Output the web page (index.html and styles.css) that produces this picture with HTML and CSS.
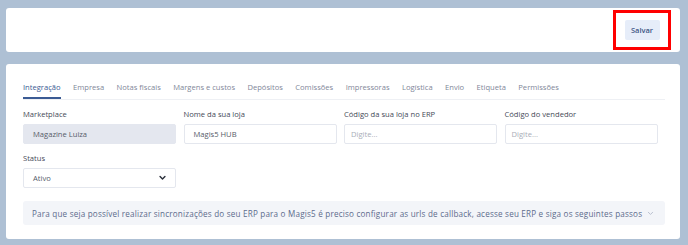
FILE: index.html
```html
<!DOCTYPE html>
<html lang="pt-BR">
<head>
<meta charset="utf-8">
<link rel="stylesheet" href="styles.css">
</head>
<body>
<div class="page">
  <div class="card topbar">
    <div class="highlight">
      <button class="btn-save">Salvar</button>
    </div>
  </div>
  <div class="card main">
    <nav class="tabs">
      <span class="tab active">Integração</span>
      <span class="tab">Empresa</span>
      <span class="tab">Notas fiscais</span>
      <span class="tab">Margens e custos</span>
      <span class="tab">Depósitos</span>
      <span class="tab">Comissões</span>
      <span class="tab">Impressoras</span>
      <span class="tab">Logística</span>
      <span class="tab">Envio</span>
      <span class="tab">Etiqueta</span>
      <span class="tab">Permissões</span>
    </nav>
    <div class="grid">
      <div class="field">
        <label class="label">Marketplace</label>
        <div class="input disabled">Magazine Luiza</div>
      </div>
      <div class="field">
        <label class="label">Nome da sua loja</label>
        <div class="input">Magis5 HUB</div>
      </div>
      <div class="field">
        <label class="label">Código da sua loja no ERP</label>
        <div class="input placeholder">Digite...</div>
      </div>
      <div class="field">
        <label class="label">Código do vendedor</label>
        <div class="input placeholder">Digite...</div>
      </div>
      <div class="field">
        <label class="label">Status</label>
        <div class="input select">
          <span>Ativo</span>
          <svg class="chev" viewBox="0 0 10 8" width="7" height="6"><path d="M1.5 2 L5 5.5 L8.5 2" fill="none" stroke="#2a2f3a" stroke-width="2" stroke-linecap="round" stroke-linejoin="round"/></svg>
        </div>
      </div>
    </div>
    <div class="alert">
      <span>Para que seja possível realizar sincronizações do seu ERP para o Magis5 é preciso configurar as urls de callback, acesse seu ERP e siga os seguintes passos</span>
      <svg class="alert-chev" viewBox="0 0 10 8" width="7" height="5"><path d="M1.5 2 L5 5.5 L8.5 2" fill="none" stroke="#b4bccb" stroke-width="1.4" stroke-linecap="round" stroke-linejoin="round"/></svg>
    </div>
  </div>
</div>
</body>
</html>
```

FILE: styles.css
```css
* { box-sizing: border-box; }
html, body { margin: 0; padding: 0; }
body {
  background: #aec0d4;
  font-family: "Open Sans", "DejaVu Sans", sans-serif;
  color: #4a4f5c;
  width: 688px;
  height: 245px;
  overflow: hidden;
}
.page {
  padding: 8px 8px 0 6px;
  display: flex;
  flex-direction: column;
  gap: 12px;
}
.card {
  background: #ffffff;
  border-radius: 3px;
}
.topbar {
  height: 44px;
  display: flex;
  justify-content: flex-end;
  align-items: center;
  padding-right: 9px;
}
.highlight {
  border: 3px solid #ff0000;
  width: 58px;
  height: 40px;
  display: flex;
  align-items: center;
  justify-content: center;
}
.btn-save {
  border: none;
  background: #e6edf9;
  color: #3f5685;
  font-family: inherit;
  font-weight: 600;
  font-size: 7.5px;
  width: 35px;
  height: 20px;
  border-radius: 2px;
  padding: 0;
}
.main {
  height: 175px;
  padding: 14px 15px 0 17px;
}
.tabs {
  display: flex;
  gap: 12.4px;
  border-bottom: 1px solid #eef0f4;
  height: 22px;
  align-items: flex-start;
  padding-top: 4px;
}
.tab {
  font-size: 7.6px;
  color: #7f8799;
  height: 17px;
  white-space: nowrap;
}
.tab.active {
  color: #3b5b94;
  border-bottom: 2px solid #3b5b94;
}
.grid {
  display: grid;
  grid-template-columns: repeat(4, 153px);
  column-gap: 7.5px;
  row-gap: 9px;
  margin-top: 9px;
}
.field {
  display: flex;
  flex-direction: column;
  gap: 5px;
}
.label {
  font-size: 7.6px;
  color: #454a57;
  height: 10px;
  line-height: 10px;
}
.input {
  height: 20px;
  border: 1px solid #e4e7ee;
  border-radius: 2px;
  font-size: 7.6px;
  color: #565c69;
  padding: 0 9px;
  display: flex;
  align-items: center;
  background: #fff;
}
.input.disabled {
  background: #e4e7ef;
  border-color: #e4e7ef;
}
.input.placeholder {
  color: #a9aeb8;
  padding-left: 6px;
}
.select {
  justify-content: space-between;
  padding-right: 9px;
}
.chev { display: block; }
.alert {
  margin-top: 13px;
  height: 24px;
  background: #f3f5f9;
  border-radius: 3px;
  display: flex;
  align-items: center;
  justify-content: space-between;
  padding: 0 11px 0 9px;
  font-size: 8.1px;
  letter-spacing: 0.2px;
  color: #5c6b8c;
  white-space: nowrap;
}
.alert-chev { display: block; }
```
